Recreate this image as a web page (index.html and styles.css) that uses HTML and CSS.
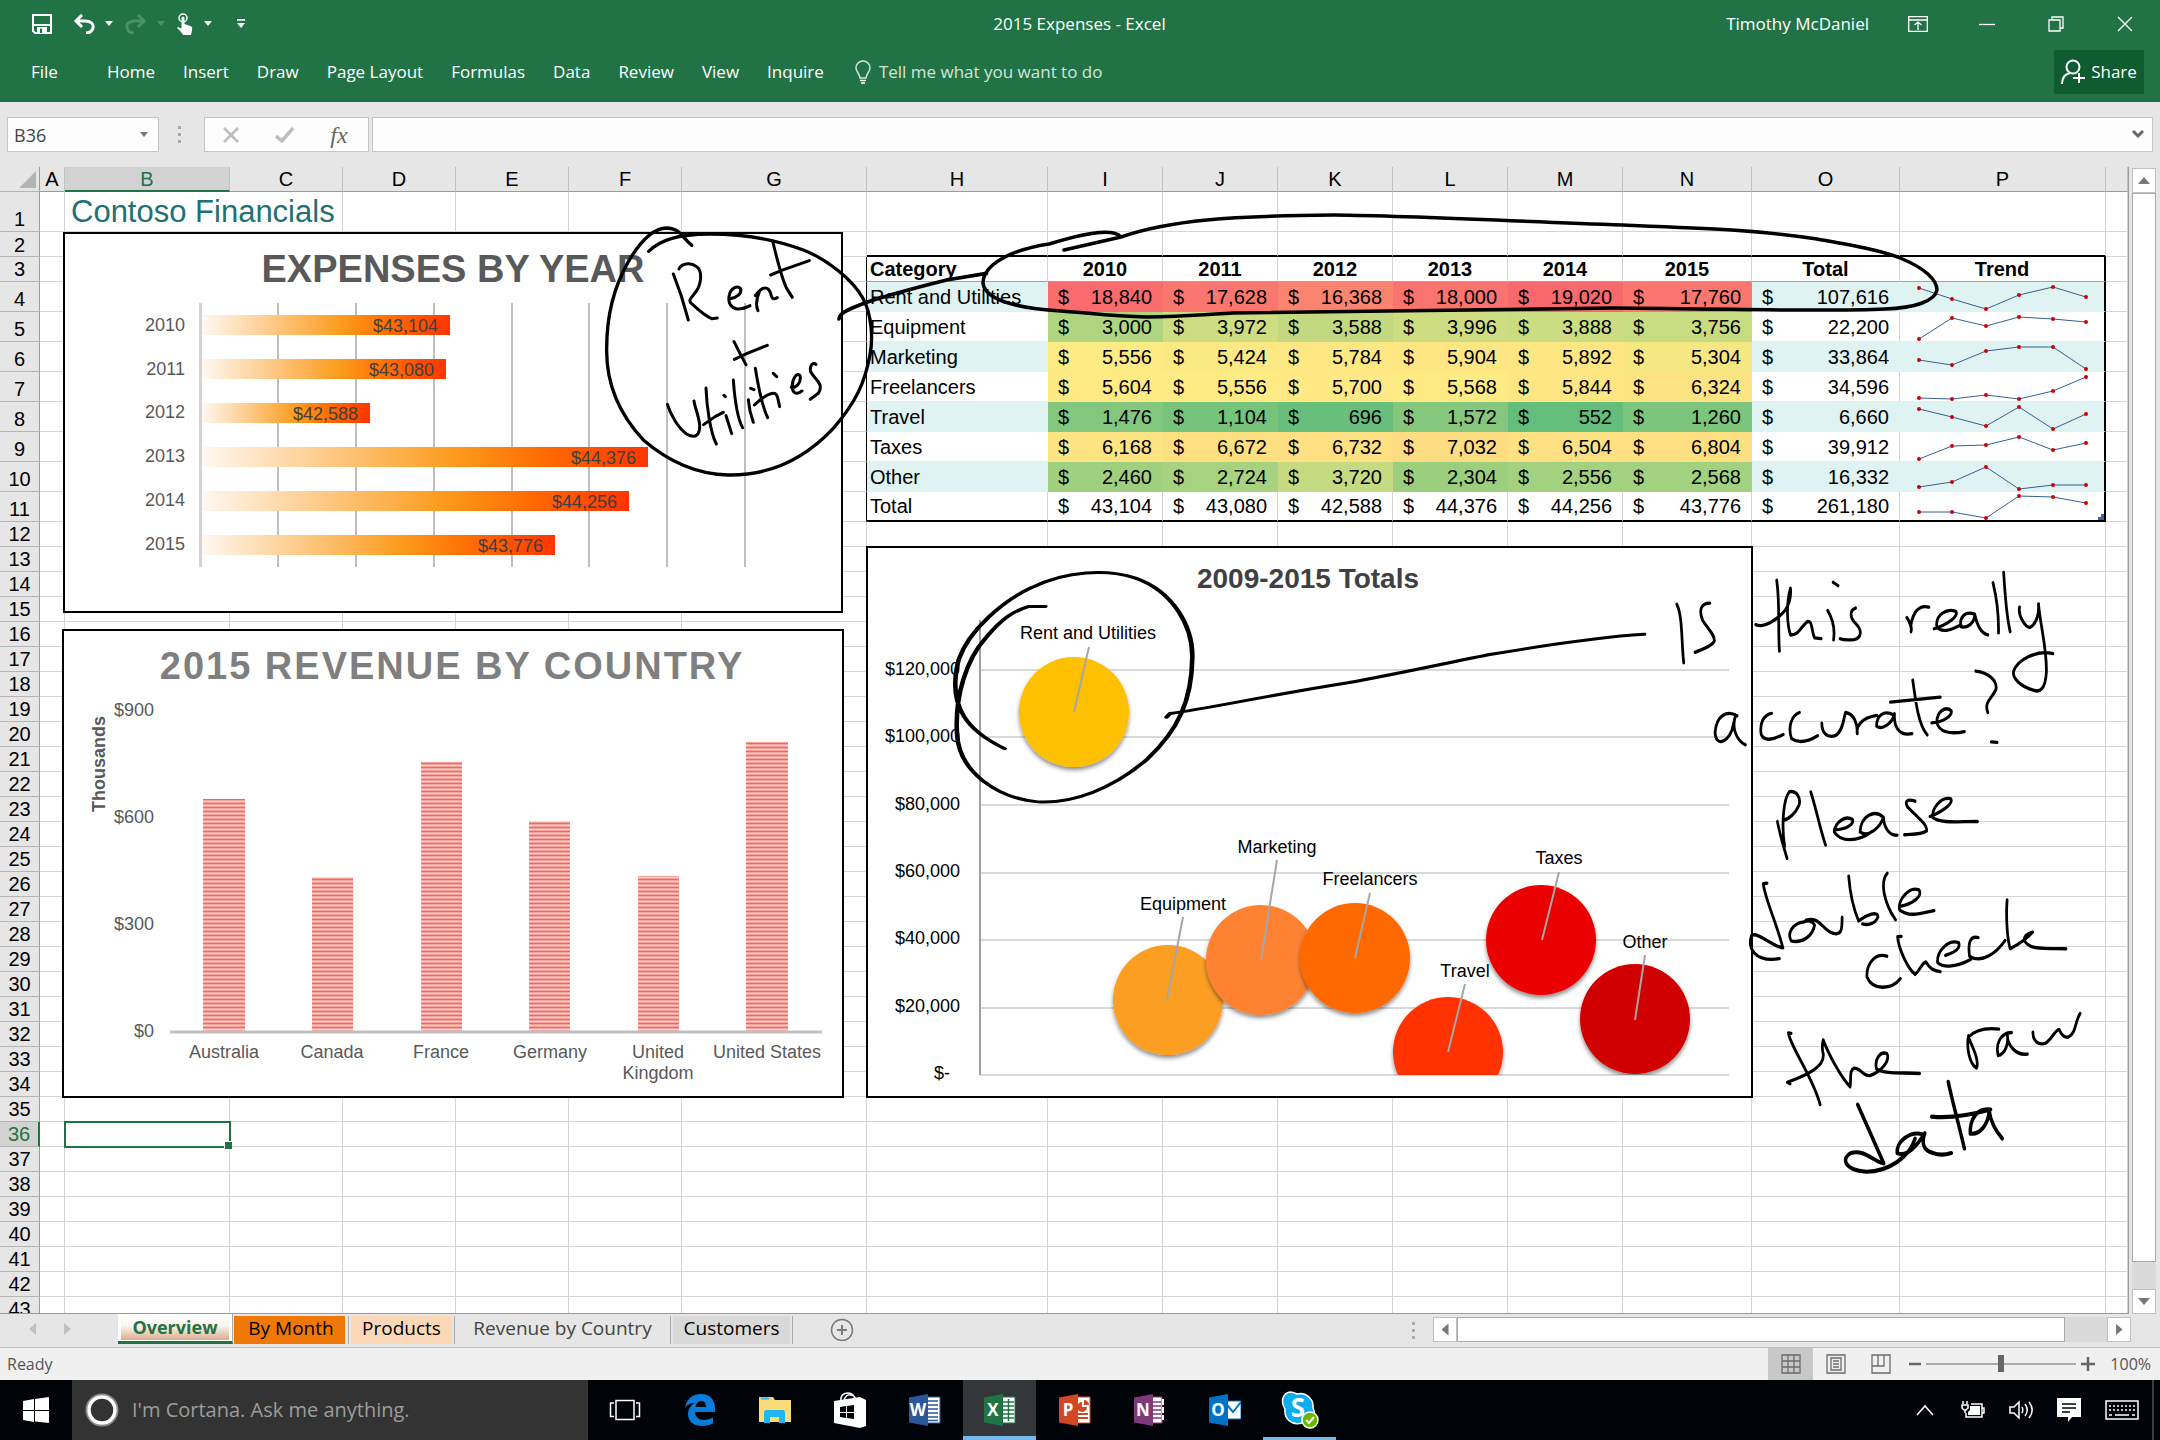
FILE: index.html
```html
<!DOCTYPE html>
<html lang="en">
<head>
<meta charset="utf-8">
<title>2015 Expenses - Excel</title>
<link rel="stylesheet" href="styles.css">
</head>
<body>
<header class="ribbon">
  <div class="titlebar">
    <div class="quick">
      <button class="qbtn" aria-label="Save"><svg width="20" height="20" viewBox="0 0 20 20" fill="none" stroke="#fff" stroke-width="2"><path d="M1 1h18v18H3l-2-2zM1 11h18"/><path d="M5 19v-6h10v6z" fill="#fff" stroke="none"/><path d="M9 14.500v4.500" stroke="#217346"/></svg></button>
      <button class="qbtn undo" aria-label="Undo"><svg width="22" height="20" viewBox="0 0 22 20" fill="none" stroke="#fff" stroke-width="3"><path d="M9 1L3 7l6 6M3 7h9c6 0 9 3 8 7-1 3-4 5-7 5"/></svg></button>
      <button class="arrow" aria-label="Undo list"></button>
      <button class="qbtn redo" aria-label="Redo" disabled><svg width="22" height="20" viewBox="0 0 22 20" fill="none" stroke="#4c9069" stroke-width="3"><path d="M13 1l6 6-6 6M19 7h-9C4 7 1 10 2 14c1 3 4 5 7 5"/></svg></button>
      <button class="arrow dim" aria-label="Redo list" disabled></button>
      <button class="qbtn touch" aria-label="Touch mode"><svg width="18" height="22" viewBox="0 0 18 22" fill="#fff"><circle cx="7" cy="5" r="4" fill="none" stroke="#fff" stroke-width="1.500"/><path d="M5.500 5a1.500 1.500 0 013 0v6l6 2c2 1 2 2 1.500 4L15 22H7c-1-3-4-5-6-7l1-1 3.500 1.500z"/></svg></button>
      <button class="arrow" aria-label="Touch mode list"></button>
      <button class="arrow more" aria-label="Customize toolbar"></button>
    </div>
    <h1 class="doc">2015 Expenses - Excel</h1>
    <div class="winctl">
      <span class="user">Timothy McDaniel</span>
      <button class="wbtn" aria-label="Ribbon display"><svg width="20" height="16" viewBox="0 0 20 16" fill="none" stroke="#fff" stroke-width="1.300"><path d="M.7.7h18.600v14.600H.7zM.7 4h18.600M10 14V6M6.500 9L10 6l3.500 3"/></svg></button>
      <button class="wbtn" aria-label="Minimize"><svg width="16" height="16" viewBox="0 0 16 16" stroke="#fff" stroke-width="1.300"><path d="M0 8.500h16"/></svg></button>
      <button class="wbtn" aria-label="Restore"><svg width="16" height="16" viewBox="0 0 16 16" fill="none" stroke="#fff" stroke-width="1.300"><path d="M1 4h11v11H1zM4 4V1h11v11h-3"/></svg></button>
      <button class="wbtn" aria-label="Close"><svg width="16" height="16" viewBox="0 0 16 16" stroke="#fff" stroke-width="1.300"><path d="M1 1l14 14M15 1L1 15"/></svg></button>
    </div>
  </div>
  <nav class="menu">
    <a class="file" href="#">File</a><a href="#">Home</a><a href="#">Insert</a><a href="#">Draw</a><a href="#">Page Layout</a><a href="#">Formulas</a><a href="#">Data</a><a href="#">Review</a><a href="#">View</a><a href="#">Inquire</a>
    <button class="tell"><svg width="16" height="24" viewBox="0 0 16 24" fill="none" stroke="#d3e5da" stroke-width="1.500"><path d="M5 18c0-4-4-6-4-10a7 7 0 0114 0c0 4-4 6-4 10z"/><path d="M5 20.500h6M6 23h4" stroke="#fff"/></svg><span>Tell me what you want to do</span></button>
    <button class="share"><svg width="24" height="26" viewBox="0 0 24 26" fill="none" stroke="#fff" stroke-width="2"><circle cx="12" cy="8" r="6.500"/><path d="M1 25c0-6 3-10 8-11M18 14v10M12 19h12"/></svg><span>Share</span></button>
  </nav>
</header>

<section class="formula">
  <div class="namebox"><input aria-label="Name box" value="B36"><button class="arrow" aria-label="Names"></button></div>
  <span class="grip"></span>
  <div class="fxbox">
    <button aria-label="Cancel"><svg width="18" height="16" viewBox="0 0 18 16" stroke="#bdbdbd" stroke-width="2.500"><path d="M2 1l14 14M16 1L2 15"/></svg></button>
    <button aria-label="Enter"><svg width="20" height="16" viewBox="0 0 20 16" fill="none" stroke="#bdbdbd" stroke-width="3.500"><path d="M1 9l6 5L18 1"/></svg></button>
    <button class="fx" aria-label="Insert function">fx</button>
  </div>
  <div class="fbar"><input aria-label="Formula bar"><button aria-label="Expand formula bar"><svg width="12" height="9" viewBox="0 0 12 9" fill="none" stroke="#666" stroke-width="3"><path d="M1 1l5 5 5-5"/></svg></button></div>
</section>

<main class="work">
  <div class="sheet">
    <table class="cells">
      <colgroup><col class="w-gut"><col class="w-a"><col class="w-b"><col class="w-c"><col class="w-c"><col class="w-c"><col class="w-c"><col class="w-g"><col class="w-h"><col class="w-i"><col class="w-i"><col class="w-i"><col class="w-i"><col class="w-i"><col class="w-n"><col class="w-o"><col class="w-p"><col></colgroup>
      <thead><tr id="letters"></tr></thead>
      <tbody id="rows"></tbody>
    </table>

    <figure class="chart expenses">
      <svg viewBox="63 232 780 381" width="780" height="381">
        <defs><linearGradient id="heat"><stop offset="0" stop-color="#fff8f1"/><stop offset=".56" stop-color="#fc9c1e"/><stop offset=".76" stop-color="#ff6d02"/><stop offset="1" stop-color="#ff3500"/></linearGradient></defs>
        <text class="t-title dark" x="453" y="282">EXPENSES BY YEAR</text>
        <path d="M278 303V567M356 303V567M434 303V567M512 303V567M589 303V567M667 303V567M745 303V567" stroke="#bfbfbf" stroke-width="2"/>
        <path d="M200.500 303V567" stroke="#d4d4d4" stroke-width="3"/>
        <g fill="url(#heat)"><rect x="202" y="315" width="248" height="20"/><rect x="202" y="359" width="244" height="20"/><rect x="202" y="403" width="168" height="20"/><rect x="202" y="447" width="446" height="20"/><rect x="202" y="491" width="427" height="20"/><rect x="202" y="535" width="353" height="20"/></g>
        <g class="t-lab end dark2"><text x="438" y="332">$43,104</text><text x="434" y="376">$43,080</text><text x="358" y="420">$42,588</text><text x="636" y="464">$44,376</text><text x="617" y="508">$44,256</text><text x="543" y="552">$43,776</text></g>
        <g class="t-lab end grey"><text x="185" y="331">2010</text><text x="185" y="375">2011</text><text x="185" y="418">2012</text><text x="185" y="462">2013</text><text x="185" y="506">2014</text><text x="185" y="550">2015</text></g>
      </svg>
    </figure>

    <figure class="chart revenue">
      <svg viewBox="62 629 782 469" width="782" height="469">
        <defs><pattern id="stripes" width="8" height="4" patternUnits="userSpaceOnUse"><rect width="8" height="4" fill="#fba29c"/><rect width="8" height="1" y="1" fill="#fdd3d0"/><rect width="8" height="1" y="3" fill="#f8635c"/></pattern></defs>
        <text class="t-title spaced" x="452" y="679">2015 REVENUE BY COUNTRY</text>
        <text class="t-lab bold grey" transform="translate(105 764) rotate(-90)">Thousands</text>
        <g class="t-lab end grey"><text x="154" y="716">$900</text><text x="154" y="823">$600</text><text x="154" y="930">$300</text><text x="154" y="1037">$0</text></g>
        <g fill="url(#stripes)"><rect x="203" y="799" width="42" height="232"/><rect x="312" y="877" width="41" height="154"/><rect x="421" y="762" width="41" height="269"/><rect x="529" y="821" width="41" height="210"/><rect x="638" y="876" width="41" height="155"/><rect x="746" y="742" width="42" height="289"/></g>
        <path d="M170 1032H822" stroke="#bfbfbf" stroke-width="3"/>
        <g class="t-lab grey"><text x="224" y="1058">Australia</text><text x="332" y="1058">Canada</text><text x="441" y="1058">France</text><text x="550" y="1058">Germany</text><text x="658" y="1058">United</text><text x="658" y="1079">Kingdom</text><text x="767" y="1058">United States</text></g>
      </svg>
    </figure>

    <figure class="chart totals">
      <svg viewBox="866 546 887 552" width="887" height="552">
        <defs>
          <filter id="drop" x="-20%" y="-20%" width="140%" height="150%"><feDropShadow dx="0" dy="3" stdDeviation="2" flood-opacity=".45"/></filter>
          <clipPath id="plot"><rect x="980" y="600" width="760" height="475"/></clipPath>
        </defs>
        <text class="t-sub" x="1308" y="588">2009-2015 Totals</text>
        <path d="M980 670H1729M980 737H1729M980 805H1729M980 873H1729M980 940H1729M980 1008H1729M980 1075H1729" stroke="#d9d9d9" stroke-width="2"/>
        <path d="M980 620V1075" stroke="#a0a0a0" stroke-width="2"/>
        <g class="t-lab end"><text x="960" y="675">$120,000</text><text x="960" y="742">$100,000</text><text x="960" y="810">$80,000</text><text x="960" y="877">$60,000</text><text x="960" y="944">$40,000</text><text x="960" y="1012">$20,000</text><text x="950" y="1079">$-</text></g>
        <g clip-path="url(#plot)">
          <g filter="url(#drop)"><circle cx="1074" cy="712" r="55" fill="#ffc000"/></g>
          <g filter="url(#drop)"><circle cx="1168" cy="1000" r="55" fill="#fb9e20"/></g>
          <g filter="url(#drop)"><circle cx="1261" cy="960" r="55" fill="#ff8230"/></g>
          <g filter="url(#drop)"><circle cx="1355" cy="958" r="55" fill="#ff6900"/></g>
          <g filter="url(#drop)"><circle cx="1448" cy="1052" r="55" fill="#ff3300"/></g>
          <g filter="url(#drop)"><circle cx="1541" cy="940" r="55" fill="#ea0000"/></g>
          <g filter="url(#drop)"><circle cx="1635" cy="1019" r="55" fill="#d00000"/></g>
        </g>
        <path d="M1089 647L1074 712M1183 917L1167 1000M1277 860L1261 960M1370 893L1355 958M1465 984L1448 1052M1559 872L1542 940M1645 955L1635 1020" stroke="#a6a6a6" stroke-width="2"/>
        <g class="t-lab"><text x="1088" y="639">Rent and Utilities</text><text x="1183" y="910">Equipment</text><text x="1277" y="853">Marketing</text><text x="1370" y="885">Freelancers</text><text x="1465" y="977">Travel</text><text x="1559" y="864">Taxes</text><text x="1645" y="948">Other</text></g>
      </svg>
    </figure>

    <svg class="ink" viewBox="0 167 2132 1147" width="2132" height="1147" aria-label="Handwritten notes: Rent + Utilities. Is this really accurate? Please double check the raw data">
      <g transform="translate(600 225) scale(.3333)" stroke-width="9">
        <path stroke-width="10" d="M146 79C180 45 230 28 330 27C430 27 530 45 610 75C680 102 760 165 790 222C815 270 820 340 810 390C795 470 770 530 700 610C620 695 520 752 385 750C280 748 200 705 130 645C60 570 18 480 20 370C20 270 45 180 85 110C120 50 160 10 200 9C240 10 245 35 275 61"/>
        <path d="M220 147L243 210L265 285M237 132C243 117 270 110 290 125C310 140 302 180 288 200C275 218 262 225 275 236C290 250 320 275 335 281L352 279M388 222C410 218 428 205 421 190C412 180 392 190 388 210C382 235 395 250 412 252C430 252 440 248 450 242M478 200C470 220 466 240 474 257M466 212C490 180 505 185 512 205C515 222 520 225 532 218M518 48C528 90 545 160 560 190L577 217M512 150L545 136L628 107M402 350L420 385L438 419M403 403L440 386L502 361"/>
        <path d="M202 538C212 570 235 610 260 627C290 645 300 625 299 600C296 570 285 550 282 528M318 489C320 540 330 620 349 657M311 599L345 575L370 562M378 572L395 626M372 511l4 4M400 465C404 520 412 580 428 608M445 524C447 550 452 570 460 592M452 490l10 4M466 430C474 480 485 540 503 578M463 540C490 515 520 495 530 510C535 520 535 530 539 545M520 445l10 10M574 487C590 490 605 470 600 452C592 440 575 460 577 490C580 508 595 508 606 498M648 418C640 410 628 420 632 440C640 460 675 475 655 505L631 523"/>
        <path stroke-width="11" d="M717 282C718 265 740 255 800 232C880 205 980 180 1040 165L1160 145"/>
      </g>
      <path stroke-width="3.500" d="M1064 250L1121 237C1170 220 1230 216 1334 215C1420 216 1508 221 1623 225C1700 228 1760 230 1817 239C1850 245 1880 250 1900 258C1925 268 1937 280 1937 290C1935 301 1915 308 1885 309C1823 312 1750 309 1612 308C1500 309 1376 311 1233 313C1200 315 1175 317 1147 317C1110 316 1090 313 1061 311C1025 309 985 302 983 283C983 265 1010 250 1049 244C1075 236 1112 226 1121 237"/>
      <g transform="translate(860 530) scale(.574 .3699)" stroke-width="8">
        <path d="M252 591C190 545 150 480 172 350C190 270 250 190 300 155C360 110 430 105 480 130C545 165 580 260 579 345C578 460 555 540 500 620C440 700 370 740 310 735C240 725 172 655 169 550C165 450 185 350 220 290C250 235 270 218 293 207L323 207M534 506L540 496C600 485 700 450 850 413C950 385 1050 350 1100 336C1200 310 1300 288 1366 282"/>
      </g>
      <g transform="translate(1620 550) scale(.3444 .4145)" stroke-width="8">
        <path d="M165 131C182 160 178 220 185 272M261 128C235 128 228 145 240 170C260 195 275 205 274 220C265 235 235 240 218 247M455 73C465 130 458 190 463 244M394 180C420 190 460 165 480 145C500 120 495 95 495 92C482 130 485 180 495 205C520 205 525 185 545 172C560 172 555 195 565 212L584 214M603 146C620 170 624 195 620 217M619 78L633 86M684 140C665 145 668 165 685 178C705 195 700 212 680 216C660 218 645 216 639 214"/>
        <path d="M833 163C842 175 848 190 845 197M845 180C850 155 865 130 897 138M912 190C950 180 985 160 975 148C950 140 915 155 920 185C930 200 960 195 990 180M1030 155C1000 145 985 165 990 185C1010 190 1030 175 1030 155C1035 175 1045 200 1068 205M1083 79C1095 120 1100 160 1099 200M1114 54C1118 110 1122 160 1133 197M1160 138C1155 160 1180 190 1192 186C1212 175 1217 150 1215 130C1222 190 1240 240 1238 295C1235 335 1220 345 1200 338C1165 330 1138 310 1143 292C1155 265 1210 240 1257 250"/>
        <path d="M340 400C310 385 280 400 276 440C278 475 310 465 325 435L336 398C322 430 340 460 364 470M440 394C415 398 405 420 410 445C420 465 450 455 474 445M521 392C495 400 488 430 498 455C520 468 550 460 574 448M586 418C586 440 600 455 625 448C650 435 650 400 655 392C680 395 690 420 689 443C685 425 700 405 746 399M795 398C765 385 745 400 745 425C760 435 790 420 797 395C795 420 805 450 848 443M850 314C858 360 865 420 892 446M785 367L930 355M905 417C940 415 965 400 962 388C945 375 920 390 920 415C925 440 960 445 1000 438M1033 292C1070 295 1095 315 1092 335C1085 355 1055 365 1068 392M1078 463L1095 464"/>
        <path d="M457 655C465 690 475 715 485 744M478 715C468 660 475 600 492 583C515 580 525 600 520 615C510 635 490 650 474 652M554 584C570 625 580 670 597 712M622 675C660 675 680 660 675 650C655 640 625 655 622 680C640 705 690 705 730 680M765 645C740 625 700 640 697 680C720 695 755 670 765 645C765 665 780 690 805 688M857 606C835 600 825 605 835 620C870 650 895 665 890 678C870 688 845 685 826 687M900 643C940 630 970 610 960 600C930 595 905 625 908 645C930 660 980 655 1038 655"/>
        <path d="M427 804L416 805C420 840 455 900 473 960C440 955 400 920 382 930C370 960 390 995 463 986M535 897C500 900 485 925 497 943C530 950 560 930 565 905C560 895 545 892 535 897M540 893C575 885 580 905 610 922C645 935 645 915 645 886M664 787C668 830 680 870 693 895C715 880 750 870 749 885C740 905 715 905 704 902M776 780C755 800 765 850 800 892M812 860C850 855 880 835 868 820C840 810 805 845 812 868C840 888 880 875 912 870"/>
        <path d="M775 980C740 970 715 1000 717 1030C735 1065 790 1060 814 1034M817 932L806 933C808 960 835 1010 857 1024C870 1015 878 995 888 994C900 1010 910 1015 930 1017M945 978C975 970 990 960 983 947C955 940 920 965 922 995C940 1010 980 1005 1018 988M1040 935C1015 930 1010 950 1015 980C1050 1000 1095 970 1118 942M1124 844C1120 890 1125 940 1133 962C1160 950 1185 935 1198 922C1165 930 1170 945 1190 955C1210 965 1250 960 1295 962"/>
        <path d="M497 1166L489 1165C495 1200 560 1270 581 1338M494 1288L486 1284C550 1265 595 1245 590 1215C585 1200 588 1190 590 1182C605 1215 640 1270 668 1295C672 1275 665 1255 680 1250C700 1250 705 1270 725 1268C760 1260 785 1230 775 1215C755 1208 738 1230 745 1252C770 1265 820 1260 870 1263M1012 1172C1005 1200 1015 1240 1035 1250C1045 1230 1020 1195 1012 1175C1030 1160 1060 1152 1100 1156M1137 1164C1105 1165 1090 1190 1098 1220C1120 1215 1128 1190 1125 1172C1125 1195 1150 1220 1183 1216M1199 1163C1198 1185 1215 1195 1235 1190C1255 1180 1265 1155 1275 1157C1282 1170 1290 1178 1302 1175C1325 1165 1320 1140 1336 1118"/>
        <path stroke-width="10" d="M690 1338L766 1480C735 1475 710 1445 670 1455C645 1465 645 1495 715 1500C780 1500 840 1465 857 1420M880 1410C840 1400 800 1430 805 1455C830 1465 860 1440 885 1407C875 1430 880 1450 910 1455C930 1462 950 1458 962 1455M953 1283C965 1330 985 1390 1000 1444M905 1367C960 1372 1010 1365 1076 1350C1040 1345 1015 1370 1017 1408C1045 1412 1070 1385 1072 1352C1075 1375 1090 1400 1110 1420"/>
      </g>
    </svg>
  </div>
  <div class="vscroll"><button class="sbtn" aria-label="Scroll up"><i class="tri up"></i></button><div class="vtrack"><div class="vthumb"></div></div><button class="sbtn" aria-label="Scroll down"><i class="tri down"></i></button></div>
</main>

<div class="tabs">
  <div class="nav"><button aria-label="Previous sheet"><i class="tri left"></i></button><button aria-label="Next sheet"><i class="tri right"></i></button></div>
  <button class="tab active">Overview</button><button class="tab orange">By Month</button><button class="tab peach">Products</button><button class="tab plain">Revenue by Country</button><button class="tab grey-tab">Customers</button>
  <button class="add" aria-label="New sheet"><svg width="24" height="24" viewBox="0 0 24 24" fill="none" stroke="#7a7a7a"><circle cx="12" cy="12" r="10.500" stroke-width="1.500"/><path d="M12 7v10M7 12h10" stroke-width="2"/></svg></button>
  <span class="grip"></span>
  <div class="hscroll"><button class="sbtn" aria-label="Scroll left"><i class="tri left"></i></button><div class="htrack"><div class="hthumb"></div></div><button class="sbtn" aria-label="Scroll right"><i class="tri right"></i></button></div>
</div>

<footer class="status">
  <span class="ready">Ready</span>
  <button class="view on" aria-label="Normal view"><svg width="20" height="20" viewBox="0 0 20 20" fill="none" stroke="#6b6b6b" stroke-width="1.300"><path d="M1 1h18v18H1zM7 1v18M13 1v18M1 7h18M1 13h18"/></svg></button>
  <button class="view" aria-label="Page layout view"><svg width="20" height="20" viewBox="0 0 20 20" fill="none" stroke="#6b6b6b" stroke-width="1.300"><path d="M1 1h18v18H1zM5 4h10v12H5zM7 7h6M7 10h6M7 13h6"/></svg></button>
  <button class="view" aria-label="Page break view"><svg width="20" height="20" viewBox="0 0 20 20" fill="none" stroke="#6b6b6b" stroke-width="1.300"><path d="M1 1h18v18H1zM1 12h12V1M7 1v11"/></svg></button>
  <button class="zoombtn" aria-label="Zoom out"><svg width="14" height="14" viewBox="0 0 14 14" stroke="#666" stroke-width="2.500"><path d="M1 7h12"/></svg></button>
  <input class="zoom" type="range" min="0" max="100" value="50" aria-label="Zoom">
  <button class="zoombtn" aria-label="Zoom in"><svg width="14" height="14" viewBox="0 0 14 14" stroke="#666" stroke-width="2.500"><path d="M0 7h14M7 0v14"/></svg></button>
  <span class="pct">100%</span>
</footer>

<div class="taskbar">
  <button class="start" aria-label="Start"><svg width="26" height="26" viewBox="0 0 26 26" fill="#fff"><path d="M0 4l11-2v11H0zM12 2l14-2v13H12zM0 14h11v11L0 23zM12 14h14v12l-14-1.500z"/></svg></button>
  <label class="cortana"><svg width="34" height="34" viewBox="0 0 34 34" fill="none"><circle cx="17" cy="17" r="15.500" stroke="#8d8d8d" stroke-width="2"/><circle cx="17" cy="17" r="13" stroke="#fff" stroke-width="3.500"/></svg><input aria-label="Search" placeholder="I'm Cortana. Ask me anything."></label>
  <div class="apps">
    <button aria-label="Task view"><svg width="32" height="32" viewBox="0 0 32 32" fill="none" stroke="#fff" stroke-width="1.500"><path d="M7 6.500h18v19H7zM5 9H1.500v13.500H5M27 9h3.500v13.500H27"/></svg></button>
    <button aria-label="Edge"><svg width="32" height="32" viewBox="0 0 32 32" fill="#0a7bd8"><path d="M1 14C3 4 9 0 17 0c9 0 14 6 14 14v4H11c0 5 4 8 9 8 3 0 6-1 9-2.500v6C26 31 22 32 18 32 9 32 4 27 4 20c0-5 3-9 7-11-5 0-8 2-10 5zM11.500 13H22c0-4-2-6-5-6s-5 3-5.500 6z"/></svg></button>
    <button aria-label="File Explorer"><svg width="32" height="32" viewBox="0 0 32 32"><path d="M0 3h14l2 3h16v22H0z" fill="#f8cf5a"/><path d="M0 6h32v22H0z" fill="#fcdc79"/><path d="M2 4.500h8" stroke="#3bb3ec" stroke-width="2"/><path d="M5 29V18c0-1 1-2 2-2h17c1 0 2 1 2 2v11h-6v-6h-9v6z" fill="#1fb6f2"/></svg></button>
    <button aria-label="Store"><svg width="32" height="36" viewBox="0 0 32 36"><path d="M7 10C6 3 10 1 14 1s7 3 7 8M10 9c1-5 4-7 7-6 3 0 5 3 5 6" fill="none" stroke="#fff" stroke-width="1.500"/><path d="M0 9l26-4 6 3v26l-6 2L0 31z" fill="#fff"/><path d="M6 15l6-1v6H6zM13 14l7-1v7h-7zM6 21h6v5l-6-1zM13 21h7v6l-7-1z" fill="#000408"/></svg></button>
    <button aria-label="Word"><svg width="32" height="32" viewBox="0 0 32 32"><path d="M17 3h14v26H17z" fill="#fff" stroke="#2b579a"/><path d="M19 7h10M19 11h10M19 15h10M19 19h10M19 23h10M19 26.500h10" stroke="#2b579a" stroke-width="1.500"/><path d="M0 3.500L19 0v32L0 28.500z" fill="#2b579a"/><text class="logo" x="9" y="22">W</text></svg></button>
    <button class="current" aria-label="Excel"><svg width="32" height="32" viewBox="0 0 32 32"><path d="M17 3h14v26H17z" fill="#fff" stroke="#217346"/><path d="M19 8h11M19 12h11M19 16h11M19 20h11M19 24h11M24.500 5v22" stroke="#217346" stroke-width="1.500"/><path d="M0 3.500L19 0v32L0 28.500z" fill="#217346"/><text class="logo" x="9" y="22">X</text></svg></button>
    <button aria-label="PowerPoint"><svg width="32" height="32" viewBox="0 0 32 32"><path d="M17 3h14v26H17z" fill="#fff" stroke="#d24726"/><path d="M19 20h10M19 24h10" stroke="#d24726" stroke-width="2"/><path d="M23 8v5h5a5 5 0 11-5-5zM25 6a5 5 0 015 5h-5z" fill="#d24726"/><path d="M0 3.500L19 0v32L0 28.500z" fill="#d24726"/><text class="logo" x="9" y="22">P</text></svg></button>
    <button aria-label="OneNote"><svg width="32" height="32" viewBox="0 0 32 32"><path d="M17 3h11v26H17z" fill="#fff" stroke="#80397b"/><path d="M19 8h8M19 12h8M19 16h8M19 20h8M19 24h8" stroke="#80397b" stroke-width="1.500"/><path d="M28 5h2v6h-2zM28 13h2v6h-2zM28 21h2v5h-2z" fill="#fff"/><path d="M0 3.500L19 0v32L0 28.500z" fill="#80397b"/><text class="logo" x="9" y="22">N</text></svg></button>
    <button aria-label="Outlook"><svg width="32" height="32" viewBox="0 0 32 32"><path d="M17 7h15v18H17z" fill="#fff" stroke="#0072c6"/><path d="M18 11l6 7 8-10" fill="none" stroke="#0072c6" stroke-width="2"/><path d="M0 3.500L19 0v32L0 28.500z" fill="#0072c6"/><text class="logo" x="9" y="22">O</text></svg></button>
    <button class="open" aria-label="Skype"><svg width="38" height="38" viewBox="0 0 38 38"><path d="M9 1c3 0 5 1 7 2 9-2 17 5 16 14 4 8-2 16-11 15C11 35 3 28 4 18-1 10 2 2 9 1z" fill="#0aaef0" stroke="#fff" stroke-width="1.500"/><text class="logo big" x="17" y="26">S</text><circle cx="29" cy="29" r="8" fill="#6bb700" stroke="#fff" stroke-width="1.500"/><path d="M25 29l3 3 5-6" fill="none" stroke="#fff" stroke-width="2"/></svg></button>
  </div>
  <div class="tray">
    <button aria-label="Hidden icons"><svg width="18" height="12" viewBox="0 0 18 12" fill="none" stroke="#fff" stroke-width="1.500"><path d="M1 11l8-9 8 9"/></svg></button>
    <button aria-label="Battery"><svg width="24" height="18" viewBox="0 0 24 18" fill="none" stroke="#fff" stroke-width="1.500"><path d="M10 3h11v13H5v-4M21 7h2v5h-2"/><path d="M9 5h10v9H7v-3l2-2z" fill="#fff" stroke="none"/><path d="M2 0v3M6 0v3M1 4h6v3L5 9H3L1 7zM4 9v3"/></svg></button>
    <button aria-label="Volume"><svg width="24" height="20" viewBox="0 0 24 20" fill="none" stroke="#fff" stroke-width="1.500"><path d="M1 7h4l5-5v16l-5-5H1zM13 7c1 2 1 4 0 6M16 4c3 4 3 8 0 12M20 2c4 5 4 11 0 16"/></svg></button>
    <button aria-label="Notifications"><svg width="24" height="24" viewBox="0 0 24 24"><path d="M0 0h24v19h-9l-4 5v-5H0z" fill="#fff"/><path d="M5 6h14M5 10h14M5 14h8" stroke="#000408" stroke-width="1.500"/></svg></button>
    <button class="kbd" aria-label="Touch keyboard"><svg width="34" height="20" viewBox="0 0 34 20" fill="none" stroke="#fff" stroke-width="1.500"><path d="M1 1h32v18H1z"/><path d="M4 6h26M4 10h26" stroke-dasharray="2 2"/><path d="M4 15h3M10 15h14M27 15h3"/></svg></button>
  </div>
</div>
<script src="app.js"></script>
</body>
</html>
```
FILE: styles.css
```css
* { box-sizing: border-box; }
body {
  margin: 0;
  min-height: 100vh;
  display: flex;
  flex-direction: column;
  background: #e6e6e6;
  font-family: "Open Sans", "Noto Sans", sans-serif;
  font-size: 17px;
  line-height: 24px;
}
button, input { font: inherit; color: inherit; background: none; border: 0; padding: 0; margin: 0; }
button { display: flex; align-items: center; justify-content: center; flex: none; }
input { outline: 0; min-width: 0; }
a { color: inherit; text-decoration: none; }
svg { display: block; }

/* ribbon */
.ribbon { background: #217346; color: #fff; height: 102px; flex: none; }
.titlebar { display: grid; grid-template-columns: 1fr auto 1fr; align-items: center; height: 47px; padding-right: 1px; }
.quick { display: flex; align-items: center; padding-left: 32px; }
.qbtn { width: 20px; height: 24px; }
.undo { width: 22px; margin-left: 21px; }
.redo { width: 22px; margin-left: 12px; }
.touch { width: 18px; margin-left: 11px; }
.arrow { width: 8px; height: 5px; background: currentColor; clip-path: polygon(0 0, 100% 0, 50% 100%); margin-left: 10px; }
.arrow.dim { color: #4c9069; }
.arrow.more { height: 9px; margin-left: 25px; clip-path: polygon(0 0, 100% 0, 100% 20%, 0 20%, 0 45%, 100% 45%, 50% 100%, 0 45%); }
.doc { margin: 0; font-size: 17px; font-weight: 400; }
.winctl { display: flex; justify-content: flex-end; align-items: center; }
.user { margin-right: 14px; }
.wbtn { width: 69px; height: 44px; }
.menu { display: flex; align-items: center; height: 50px; padding: 0 16px 0 17px; }
.menu a { padding: 0 14px; }
.menu .file { margin-right: 21px; }
.tell { color: #d3e5da; margin-left: 17px; gap: 8px; }
.share { margin-left: auto; width: 90px; height: 44px; background: #0e5c2f; gap: 6px; }

/* formula bar */
.formula { display: flex; height: 65px; padding: 15px 7px 15px; flex: none; color: #444; }
.formula > div { background: #fdfdfd; border: 1px solid #c6c6c6; height: 35px; display: flex; align-items: center; }
.namebox { width: 152px; font-size: 18px; }
.namebox input { flex: 1; padding-left: 6px; }
.namebox .arrow { margin: 0 10px 0 0; color: #777; }
.grip { width: 3px; height: 17px; margin: 9px 23px 0 19px; background: repeating-linear-gradient(#aaa 0 3px, transparent 3px 7px); }
.fxbox { width: 165px; justify-content: space-around; margin-right: 3px; padding-right: 3px; }
.fx { font: italic 24px/24px "Liberation Serif", serif; color: #666; }
.fbar { flex: 1; }
.fbar input { flex: 1; }
.fbar button { width: 28px; }

/* sheet */
.work { flex: 1 1 0; min-height: 0; display: flex; }
.sheet { flex: 1; min-width: 0; position: relative; overflow: hidden; background: #fff; border-bottom: 1px solid #9b9b9b; border-right: 1px solid #9b9b9b; }
.cells { position: absolute; left: 0; top: 0; width: 100%; table-layout: fixed; border-spacing: 0; font: 20px/24px "Liberation Sans", Arial, sans-serif; color: #000; }
.w-gut { width: 40px; }
.w-a { width: 25px; }
.w-b { width: 165px; }
.w-c { width: 113px; }
.w-g { width: 185px; }
.w-h { width: 181px; }
.w-i { width: 115px; }
.w-n { width: 129px; }
.w-o { width: 148px; }
.w-p { width: 206px; }
.cells th, .cells td { padding: 0; height: 25px; border: 0 solid #d4d4d4; border-width: 0 1px 1px 0; white-space: nowrap; }
.cells thead th { background: #e6e6e6; font-weight: 400; line-height: 22px; border-bottom-color: #9b9b9b; border-right-color: #c0c0c0; }
.cells .gut { background: #e6e6e6; font-weight: 400; text-align: center; vertical-align: bottom; border-color: #b4b4b4; border-right-color: #9b9b9b; }
.cells thead th.on { background: #d2d2d2; color: #217346; border-bottom: 2px solid #217346; }
.cells .gut.on { background: #d2d2d2; color: #217346; border-right: 2px solid #217346; }
.cells thead .corner { vertical-align: bottom; }
.corner i { display: block; width: 17px; height: 17px; margin: 0 3px 3px auto; background: #b4b4b4; clip-path: polygon(100% 0, 100% 100%, 0 100%); }
.cells .r1 > * { height: 40px; }
.cells .r2 > * { line-height: 22px; }
.cells .tall > * { height: 30px; }
.cells .sheet-title { font-size: 31px; line-height: 36px; color: #217074; padding-left: 6px; }
.cells .edge-top { border-bottom: 2px solid #000; }
.cells .edge-left { border-right-color: #000; }
.cells .colhead { font-weight: 700; border-bottom-color: #5fc0c8; line-height: 22px; }
.cells .cat { text-align: left; padding-left: 3px; }
.cells .white { border-bottom-color: #dff3f2; }
.cells .cat.white { border-right-color: #fff; }
.cells .band { background: #dff3f2; border-color: #dff3f2; }
.cells .last { border-bottom: 2px solid #000; }
.cells .edge-right { border-right: 2px solid #000; position: relative; }
.cells .corner-mark::after { content: ""; position: absolute; right: 0; bottom: 0; width: 6px; height: 6px; background: #3f5fb5; clip-path: polygon(100% 0, 100% 100%, 0 100%, 0 50%, 50% 50%, 50% 0); }
.money { display: flex; justify-content: space-between; padding: 0 10px; }
.cells .picked { position: relative; outline: 2px solid #217346; outline-offset: -1px; }
.cells .picked::after { content: ""; position: absolute; right: -3px; bottom: -3px; width: 7px; height: 7px; background: #217346; border: solid #fff; border-width: 1px 0 0 1px; }

/* charts float over the cells */
.chart { position: absolute; margin: 0; background: #fff; outline: 2px solid #000; outline-offset: -2px; }
.expenses { left: 63px; top: 65px; }
.revenue { left: 62px; top: 462px; }
.totals { left: 866px; top: 379px; }
.chart text { font-family: "Liberation Sans", Arial, sans-serif; text-anchor: middle; }
.chart .t-title { font-size: 38px; font-weight: 700; }
.chart .spaced { fill: #7f7f7f; letter-spacing: 2px; }
.chart .dark { fill: #595959; }
.chart .dark2 text { fill: #404040; }
.chart .t-sub { font-size: 28px; font-weight: 700; fill: #404040; }
.chart .t-lab { font-size: 18px; }
.chart .bold { font-weight: 700; }
.chart .grey { fill: #595959; }
.chart .end text { text-anchor: end; }
.ink { position: absolute; left: 0; top: 0; pointer-events: none; fill: none; stroke: #000; stroke-linecap: round; stroke-linejoin: round; }

/* scroll bars */
.vscroll { width: 31px; padding: 1px 4px 0 3px; display: flex; flex-direction: column; }
.sbtn { background: #fff; border: 1px solid #c0c0c0; width: 24px; height: 25px; }
.vtrack { flex: 1; background: #dadada; }
.vthumb { height: calc(100% - 27px); background: #fff; border: 1px solid #ababab; }
.tri { width: 12px; height: 7px; background: #777; }
.up { clip-path: polygon(50% 0, 100% 100%, 0 100%); }
.down { clip-path: polygon(0 0, 100% 0, 50% 100%); }
.left, .right { width: 7px; height: 12px; }
.left { clip-path: polygon(100% 0, 100% 100%, 0 50%); }
.right { clip-path: polygon(0 0, 100% 50%, 0 100%); }

/* sheet tabs */
.tabs { display: flex; height: 34px; flex: none; border-bottom: 1px solid #c0c0c0; font-size: 19px; color: #000; }
.nav { display: flex; width: 118px; padding-left: 29px; gap: 28px; height: 30px; }
.nav .tri { background: #c0c0c0; }
.tab { height: 28px; margin-top: 2px; padding-bottom: 4px; border-right: 1px solid #ababab; }
.tab.active { width: 115px; height: 30px; margin-top: 0; padding-bottom: 1px; color: #217346; font-size: 18px; font-weight: 700; background: linear-gradient(#fff, #fbf4ef 40%, #d9ae8c) 3px 2px / 108px 24px no-repeat #fff; border-bottom: 3px solid #217346; }
.tab.orange { width: 116px; background: #f07807; border-left: 1px solid #e6e6e6; box-shadow: inset -3px 0 #e6e6e6; }
.tab.peach { width: 106px; background: #fcd8b8; box-shadow: inset 2px 0 #e6e6e6, inset -2px 0 #e6e6e6; }
.tab.plain { width: 216px; color: #444; }
.tab.grey-tab { width: 122px; background: #d9d9d9; box-shadow: inset 2px 0 #e6e6e6, inset -2px 0 #e6e6e6; }
.add { margin: 4px 0 0 37px; height: 24px; }
.tabs .grip { margin: 8px 18px 0 auto; }
.hscroll { display: flex; width: 698px; margin: 3px 29px 0 0; height: 25px; }
.htrack { flex: 1; background: #dadada; }
.hthumb { width: calc(100% - 42px); height: 25px; background: #fff; border: 1px solid #ababab; }

/* status bar */
.status { display: flex; align-items: center; height: 33px; margin-bottom: -1px; flex: none; padding: 0 9px 2px 7px; background: #f0f0f0; color: #555; font-size: 16px; }
.ready { margin-right: auto; }
.view { width: 45px; height: 32px; }
.view.on { background: #c8c8c8; }
.zoombtn { width: 14px; height: 14px; }
.view + .zoombtn { margin-left: 5px; }
.zoom { -webkit-appearance: none; appearance: none; width: 150px; height: 18px; margin: 0 5px 0 4px; background: linear-gradient(#aaa, #aaa) 0 50% / 100% 2px no-repeat; }
.zoom::-webkit-slider-thumb { -webkit-appearance: none; width: 6px; height: 17px; background: #666; }
.pct { width: 56px; text-align: right; }

/* taskbar */
.taskbar { display: flex; height: 60px; flex: none; background: #000408; color: #fff; }
.start { width: 72px; }
.cortana { width: 516px; background: #333; display: flex; align-items: center; padding-left: 13px; gap: 13px; }
.cortana input { flex: 1; font-size: 20px; }
.cortana input::placeholder { color: #9c9c9c; opacity: 1; }
.apps { display: flex; gap: 2px; }
.apps button { width: 73px; }
.current { background: #33373a; box-shadow: inset 0 -4px #76b9ed; }
.open { box-shadow: inset 0 -3px #76b9ed; }
.logo { font: 700 17px "Open Sans", sans-serif; fill: #fff; text-anchor: middle; }
.logo.big { font-size: 26px; }
.tray { display: flex; margin-left: auto; margin-right: 6px; padding-right: 1px; border-right: 2px solid #3a3d40; }
.tray button { width: 48px; }
.tray .kbd { width: 58px; }
```
FILE: app.js
```js
const LETTERS = 'ABCDEFGHIJKLMNOP'.split('');
const HEADS = ['Category', '2010', '2011', '2012', '2013', '2014', '2015', 'Total', 'Trend'];
const DATA = [
  ['Rent and Utilities', [18840, 17628, 16368, 18000, 19020, 17760], 107616, ['#f96b6c', '#fa776f', '#fb8470', '#fa736e', '#f8696b', '#fa766e']],
  ['Equipment', [3000, 3972, 3588, 3996, 3888, 3756], 22200, ['#afd580', '#cedd82', '#c2d981', '#cfdd82', '#cbdc81', '#c7db81']],
  ['Marketing', [5556, 5424, 5784, 5904, 5892, 5304], 33864, ['#ffeb84', '#fbe983', '#fee883', '#fee782', '#fee782', '#f5e782']],
  ['Freelancers', [5604, 5556, 5700, 5568, 5844, 6324], 34596, ['#ffea84', '#ffeb84', '#ffe984', '#ffeb84', '#fee783', '#fee382']],
  ['Travel', [1476, 1104, 696, 1572, 552, 1260], 6660, ['#82c77d', '#76c47c', '#68bf7b', '#85c87d', '#63be7b', '#7bc57c']],
  ['Taxes', [6168, 6672, 6732, 7032, 6504, 6804], 39912, ['#fee482', '#fee081', '#fedf81', '#fedc81', '#fee182', '#fedf81']],
  ['Other', [2460, 2724, 3720, 2304, 2556, 2568], 16332, ['#9fd07f', '#a7d27f', '#c6db81', '#9bcf7e', '#a2d17f', '#a2d17f']],
  ['Total', [43104, 43080, 42588, 44376, 44256, 43776], 261180, null]
];
const XS = [19, 52, 86, 119, 153, 186];
const fmt = n => n.toLocaleString('en-US');
const money = n => `<div class="money"><span>$</span><span>${fmt(n)}</span></div>`;

function trend(values) {
  const lo = Math.min(...values), hi = Math.max(...values);
  const pts = values.map((v, i) => [XS[i], Math.round(26 - 22 * (v - lo) / (hi - lo))]);
  return `<svg width="204" height="28" viewBox="0 0 204 28"><polyline points="${pts.join(' ')}" fill="none" stroke="#376092" stroke-width="1"/>` +
    pts.map(p => `<circle cx="${p[0]}" cy="${p[1]}" r="2" fill="#d00000"/>`).join('') + '</svg>';
}

function blanks(from, to, cls = '') {
  let s = '';
  for (let i = from; i <= to; i++) s += `<td${cls ? ` class="${cls}"` : ''}></td>`;
  return s;
}

document.getElementById('letters').innerHTML = '<th class="gut corner"><i></i></th>' +
  LETTERS.map(l => `<th${l === 'B' ? ' class="on"' : ''}>${l}</th>`).join('') + '<th></th>';

let html = '';
for (let r = 1; r <= 43; r++) {
  const tall = r >= 4 && r <= 11;
  html += `<tr class="r${r}${tall ? ' tall' : ''}"><th class="gut${r === 36 ? ' on' : ''}">${r}</th>`;
  if (r === 1) {
    html += '<td></td><td class="sheet-title" colspan="2">Contoso Financials</td>' + blanks(4, 17);
  } else if (r === 2) {
    html += blanks(1, 7) + blanks(8, 16, 'edge-top') + '<td></td>';
  } else if (r === 3) {
    html += blanks(1, 6) + '<td class="edge-left"></td>' +
      HEADS.map((h, i) => `<th class="colhead${i === 0 ? ' cat' : ''}${i === 8 ? ' edge-right' : ''}">${h}</th>`).join('') + '<td></td>';
  } else if (tall) {
    const [name, vals, total, fills] = DATA[r - 4];
    const band = r === 11 ? 'last' : r % 2 === 0 ? 'band' : 'white';
    html += blanks(1, 6) + `<td class="edge-left"></td><td class="cat ${band}">${name}</td>` +
      vals.map((v, i) => fills
        ? `<td style="background:${fills[i]};border-color:${fills[i]}">${money(v)}</td>`
        : `<td class="last">${money(v)}</td>`).join('') +
      `<td class="${band}">${money(total)}</td><td class="${band} edge-right${r === 11 ? ' corner-mark' : ''}">${trend(vals)}</td><td></td>`;
  } else if (r === 36) {
    html += '<td></td><td class="picked"></td>' + blanks(3, 17);
  } else {
    html += blanks(1, 17);
  }
  html += '</tr>';
}
document.getElementById('rows').innerHTML = html;
```
